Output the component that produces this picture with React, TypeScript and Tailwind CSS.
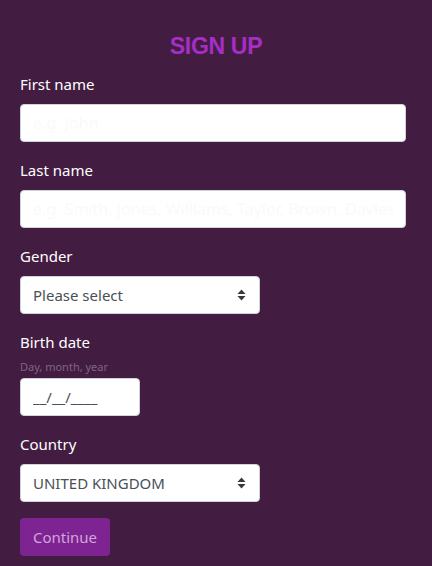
import { useState } from "react";

const Chevrons = () => (
  <svg className="w-[9px] h-[12px]" viewBox="0 0 9 12" fill="#343a40">
    <path d="M4.5 0.5 L8.5 5 H0.5 Z" />
    <path d="M4.5 11.5 L8.5 7 H0.5 Z" />
  </svg>
);

const inputCls =
  "block h-[38px] rounded-[4px] border border-[#ced4da] bg-white px-3 text-base text-[#495057] outline-none";

export default function App() {
  const [first, setFirst] = useState("");
  const [last, setLast] = useState("");
  const [birth, setBirth] = useState("__/__/____");

  return (
    <div
      className="min-h-[566px] w-full bg-[#431d41] pl-5 pr-[26px] pt-[33px] pb-4 text-white"
      style={{ fontFamily: '"Noto Sans", "Open Sans", sans-serif' }}
    >
      <h1
        className="text-center text-[23px] font-bold leading-[26px] text-[#a62ec6] tracking-[-0.3px] pl-[6px]"
        style={{ fontFamily: '"Liberation Sans", Arial, sans-serif' }}
      >
        SIGN UP
      </h1>

      <form className="mt-[13px]" onSubmit={(e) => e.preventDefault()}>
        {/* First name */}
        <div className="mb-4">
          <label className="mb-2 block text-[15px] leading-6">First name</label>
          <input
            className={`${inputCls} w-full placeholder:text-[#fafafa]`}
            placeholder="e.g. John"
            value={first}
            onChange={(e) => setFirst(e.target.value)}
          />
        </div>

        {/* Last name */}
        <div className="mb-4">
          <label className="mb-2 block text-[15px] leading-6">Last name</label>
          <input
            className={`${inputCls} w-full placeholder:text-[#fafafa]`}
            placeholder="e.g. Smith, Jones, Williams, Taylor, Brown, Davies"
            value={last}
            onChange={(e) => setLast(e.target.value)}
          />
        </div>

        {/* Gender */}
        <div className="mb-4">
          <label className="mb-2 block text-[15px] leading-6">Gender</label>
          <div className={`${inputCls} flex w-[240px] items-center justify-between pr-[13px]`}>
            <span className="text-[15px]">Please select</span>
            <Chevrons />
          </div>
        </div>

        {/* Birth date */}
        <div className="mb-4">
          <label className="block text-[15px] leading-6">Birth date</label>
          <div className="mt-1 mb-[3px] text-[11px] leading-[17px] text-[#7d6582]">
            Day, month, year
          </div>
          <input
            className={`${inputCls} w-[120px] text-[15px] text-[#6c757d]`}
            value={birth}
            onChange={(e) => setBirth(e.target.value)}
          />
        </div>

        {/* Country */}
        <div className="mb-4">
          <label className="mb-2 block text-[15px] leading-6">Country</label>
          <div className={`${inputCls} flex w-[240px] items-center justify-between pr-[13px]`}>
            <span className="text-[15px]">UNITED KINGDOM</span>
            <Chevrons />
          </div>
        </div>

        <button
          type="submit"
          className="h-[38px] w-[90px] rounded-[4px] bg-[#7e2492] text-[15px] text-[#d3a3dc]"
        >
          Continue
        </button>
      </form>
    </div>
  );
}
